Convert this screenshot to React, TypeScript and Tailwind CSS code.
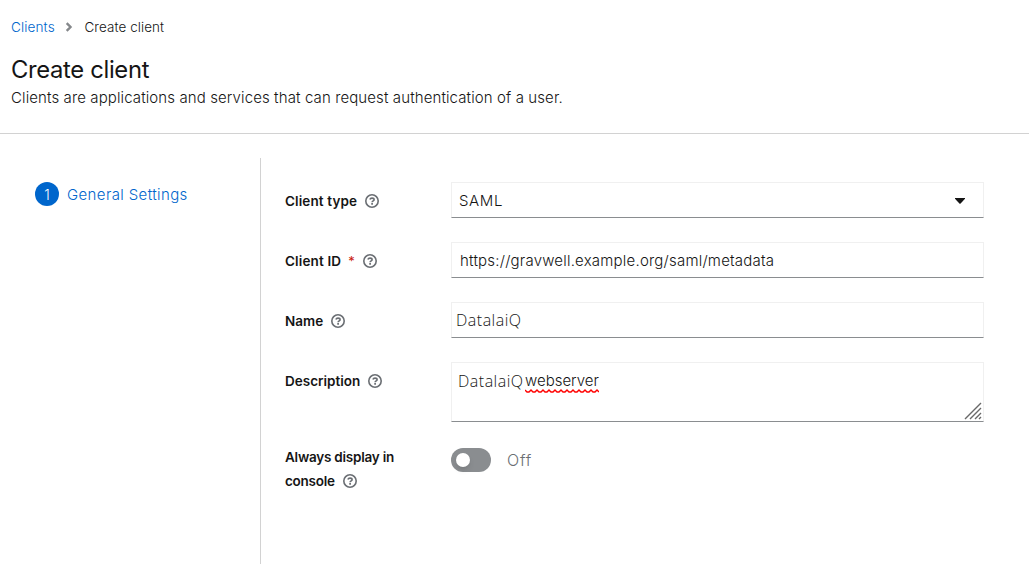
import type { ReactNode } from "react";

function HelpIcon() {
  return (
    <svg viewBox="0 0 14 14" className="size-[14px] shrink-0" fill="none" stroke="#6a6e73">
      <circle cx="7" cy="7" r="6.2" strokeWidth="1.6" />
      <path d="M4.9 5.5C5.2 4.5 6 4.1 7 4.1C8.2 4.1 9.1 4.7 9.1 5.7C9.1 6.9 7.1 6.9 7.1 8.3" strokeWidth="1.6" />
      <path d="M7.1 9.1V10.7" strokeWidth="1.7" />
    </svg>
  );
}

function Row({ label, children, className }: { label: ReactNode; children: ReactNode; className: string }) {
  return (
    <div className={`flex ${className}`}>
      <div className="w-[166px] shrink-0 pt-[7px] text-[13.5px] leading-6 font-semibold">{label}</div>
      {children}
    </div>
  );
}

function Label({ text, required, className }: { text: string; required?: boolean; className: string }) {
  return (
    <div className="flex items-center">
      <span className={className}>{text}</span>
      {required && <span className="ml-[7px] w-[7px] text-[13px] font-normal text-[#c9190b]">*</span>}
      <span className="ml-2">
        <HelpIcon />
      </span>
    </div>
  );
}

const field = "flex w-[533px] border border-[#f0f0f0] border-b-[#8a8d90] text-[15px] leading-6";

export default function App() {
  return (
    <div className="flex h-[564px] w-[1029px] flex-col overflow-hidden bg-white font-['Inter','Liberation_Sans',sans-serif] font-[350] text-[#151515]">
      <header className="h-[134px] shrink-0 border-b border-[#d2d2d2] pt-[17px] pl-[11px]">
        <nav className="flex h-5 items-center">
          <a className="w-[44px] text-[13.6px] tracking-[0.1px] text-[#0066cc]">Clients</a>
          <svg viewBox="0 0 8 10" className="mr-[11px] ml-[10px] h-[10px] w-[8px]" fill="none" stroke="#85888b" strokeWidth="2.4">
            <path d="M1.7 1.2L5.5 5L1.7 8.8" />
          </svg>
          <span className="pt-px pl-[0.5px] text-[13.4px] tracking-[0.1px]">Create client</span>
        </nav>
        <h1 className="mt-[17px] text-[23.8px] leading-[31px] font-normal tracking-[-0.33px]">Create client</h1>
        <p className="mt-px text-[15px] leading-6 tracking-[0.108px]">
          Clients are applications and services that can request authentication of a user.
        </p>
      </header>
      <main className="flex grow pt-6">
        <aside className="flex w-[261px] items-start border-r border-[#d2d2d2] pt-6 pl-[35px]">
          <span className="flex size-6 items-center justify-center rounded-full bg-[#0066cc] text-[14px] font-light text-white">1</span>
          <span className="mt-px ml-2 text-[15px] leading-6 tracking-[0.38px] text-[#0066cc]">General Settings</span>
        </aside>
        <section className="flex flex-col pt-6 pl-6">
          <Row className="h-[60px]" label={<Label text="Client type" className="tracking-[0.12px]" />}>
            <div className={`${field} h-9 items-center justify-between pr-[18px] pl-[7px]`}>
              <span className="pt-[2px] tracking-[0.6px]">SAML</span>
              <svg viewBox="0 0 10 6" className="mt-[2px] h-[6px] w-[10px]" fill="#151515">
                <path d="M0 0H10V.8L5.6 5.4Q5 6 4.4 5.4L0 .8Z" />
              </svg>
            </div>
          </Row>
          <Row className="h-[60px]" label={<Label text="Client ID" required className="tracking-[0.14px]" />}>
            <div className={`${field} h-9 items-center pl-2`}>
              <span className="pt-[2px] tracking-[0.21px]">https://gravwell.example.org/saml/metadata</span>
            </div>
          </Row>
          <Row className="h-[60px]" label={<Label text="Name" className="" />}>
            <div className={`${field} h-9 items-center pl-1`}>
              <span className="font-['Open_Sans',sans-serif] text-[16px] tracking-[0.5px]">DatalaiQ</span>
            </div>
          </Row>
          <Row className="h-[84px]" label={<Label text="Description" className="" />}>
            <div className={`${field} relative h-[60px] items-start pt-[6px] pl-[6px]`}>
              <span className="w-[67px] font-['Open_Sans',sans-serif] text-[16px] tracking-[0.5px]">DatalaiQ</span>
              <span className="relative">
                webserver
                <svg viewBox="0 0 74 4" className="absolute top-[20px] left-0 h-1 w-[74px]" fill="none" stroke="#ff0000" strokeWidth="1.4">
                  <path d="M0 1L2 3L4 3L6 1L8 3L10 3L12 1L14 3L16 3L18 1L20 3L22 3L24 1L26 3L28 3L30 1L32 3L34 3L36 1L38 3L40 3L42 1L44 3L46 3L48 1L50 3L52 3L54 1L56 3L58 3L60 1L62 3L64 3L66 1L68 3L70 3L72 1L74 3" />
                </svg>
              </span>
              <svg viewBox="0 0 18 18" className="absolute right-[1px] bottom-[1px] size-[18px]" stroke="#686868" strokeWidth="1.4">
                <path d="M1 17L17 1M6 17L17 6M11 17L17 11M15 17L17 15" />
              </svg>
            </div>
          </Row>
          <Row
            className="h-[60px]"
            label={
              <div className="-mt-[8px]">
                <div className="tracking-[-0.23px]">Always display in</div>
                <Label text="console" className="tracking-[-0.25px]" />
              </div>
            }
          >
            <div className="mt-[2px] flex h-6 items-center">
              <span className="flex h-6 w-10 items-center rounded-full bg-[#8a8d90] pl-[5px]">
                <span className="size-[14px] rounded-full bg-white shadow-md" />
              </span>
              <span className="ml-4 text-[16px] font-light tracking-[0.8px] text-[#6a6e73]">Off</span>
            </div>
          </Row>
        </section>
      </main>
    </div>
  );
}
